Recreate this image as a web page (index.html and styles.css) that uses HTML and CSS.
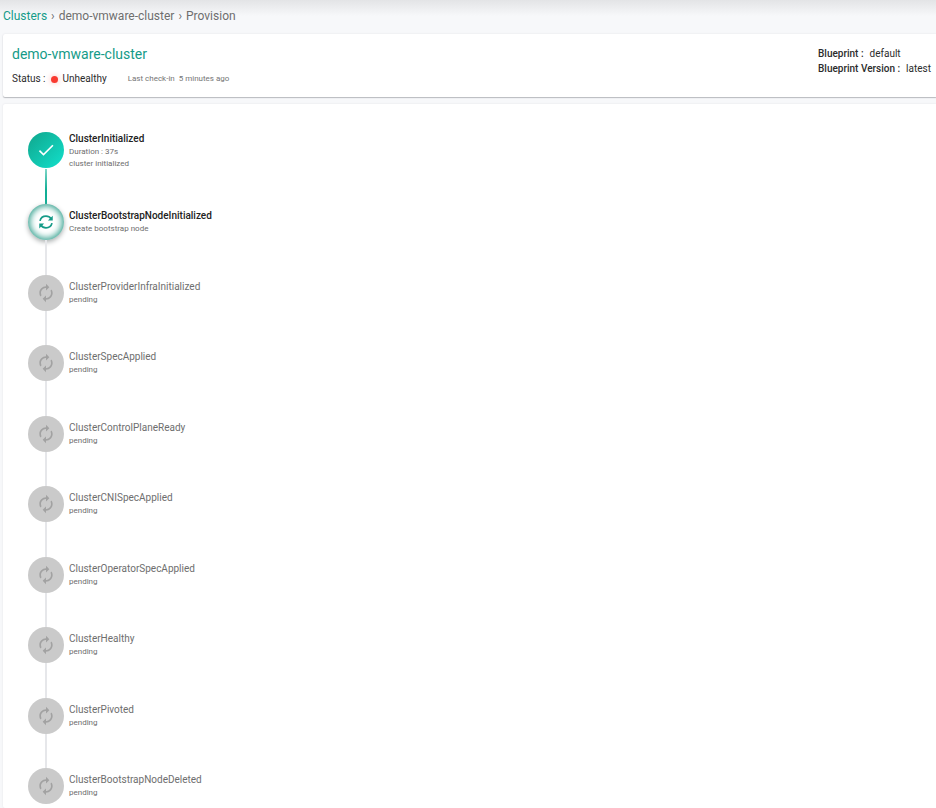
FILE: index.html
```
<!DOCTYPE html>
<html lang="en">
<head>
    <meta charset="UTF-8">
    <meta name="viewport" content="width=device-width, initial-scale=1.0">
    <title>demo-vmware-cluster - Provision</title>
    <link rel="stylesheet" href="styles.css">
</head>
<body>
    <svg class="sprite" aria-hidden="true">
        <symbol id="icon-check" viewBox="0 0 24 24">
            <path d="M9 16.17L4.83 12l-1.42 1.41L9 19 21 7l-1.41-1.41z"/>
        </symbol>
        <symbol id="icon-sync" viewBox="0 0 24 24">
            <path d="M4 10.5C5 6.5 8.200 4.200 12 4.200c3 0 5.300 1.300 7 3.800M20 13.500c-1 4-4.200 6.300-8 6.300-3 0-5.300-1.300-7-3.800" fill="none" stroke="currentColor" stroke-width="2.300"/>
            <path d="M21 3.500v6.500h-6.500zM3 20.500v-6.500h6.500z"/>
        </symbol>
        <symbol id="icon-pending" viewBox="0 0 24 24">
            <path d="M12 6v3l4-4-4-4v3c-4.42 0-8 3.58-8 8 0 1.57.46 3.03 1.24 4.26L6.7 14.8c-.45-.83-.7-1.79-.7-2.8 0-3.31 2.69-6 6-6zm6.76 1.74L17.3 9.2c.44.84.7 1.79.7 2.8 0 3.31-2.69 6-6 6v-3l-4 4 4 4v-3c4.42 0 8-3.58 8-8 0-1.57-.46-3.03-1.24-4.26z"/>
        </symbol>
    </svg>

    <nav class="breadcrumb" aria-label="Breadcrumb">
        <a href="#">Clusters</a>
        <span class="sep">›</span>
        <span>demo-vmware-cluster</span>
        <span class="sep">›</span>
        <span>Provision</span>
    </nav>

    <header class="card summary">
        <div>
            <h1><a href="#">demo-vmware-cluster</a></h1>
            <div class="status">
                <span>Status :</span>
                <span class="dot"></span>
                <span>Unhealthy</span>
                <span class="checkin">Last check-in &nbsp;5 minutes ago</span>
            </div>
        </div>
        <dl class="blueprint">
            <div><dt>Blueprint :</dt><dd>default</dd></div>
            <div><dt>Blueprint Version :</dt><dd>latest</dd></div>
        </dl>
    </header>

    <main class="card progress">
        <ol class="steps">
            <li class="step done">
                <div class="marker"><span class="circle"><svg><use href="#icon-check"/></svg></span></div>
                <div class="info"><h2>ClusterInitialized</h2><p>Duration : 37s</p><p>cluster initialized</p></div>
            </li>
            <li class="step active">
                <div class="marker"><span class="circle"><svg><use href="#icon-sync"/></svg></span></div>
                <div class="info"><h2>ClusterBootstrapNodeInitialized</h2><p>Create bootstrap node</p></div>
            </li>
            <li class="step">
                <div class="marker"><span class="circle"><svg><use href="#icon-pending"/></svg></span></div>
                <div class="info"><h2>ClusterProviderInfraInitialized</h2><p>pending</p></div>
            </li>
            <li class="step">
                <div class="marker"><span class="circle"><svg><use href="#icon-pending"/></svg></span></div>
                <div class="info"><h2>ClusterSpecApplied</h2><p>pending</p></div>
            </li>
            <li class="step">
                <div class="marker"><span class="circle"><svg><use href="#icon-pending"/></svg></span></div>
                <div class="info"><h2>ClusterControlPlaneReady</h2><p>pending</p></div>
            </li>
            <li class="step">
                <div class="marker"><span class="circle"><svg><use href="#icon-pending"/></svg></span></div>
                <div class="info"><h2>ClusterCNISpecApplied</h2><p>pending</p></div>
            </li>
            <li class="step">
                <div class="marker"><span class="circle"><svg><use href="#icon-pending"/></svg></span></div>
                <div class="info"><h2>ClusterOperatorSpecApplied</h2><p>pending</p></div>
            </li>
            <li class="step">
                <div class="marker"><span class="circle"><svg><use href="#icon-pending"/></svg></span></div>
                <div class="info"><h2>ClusterHealthy</h2><p>pending</p></div>
            </li>
            <li class="step">
                <div class="marker"><span class="circle"><svg><use href="#icon-pending"/></svg></span></div>
                <div class="info"><h2>ClusterPivoted</h2><p>pending</p></div>
            </li>
            <li class="step">
                <div class="marker"><span class="circle"><svg><use href="#icon-pending"/></svg></span></div>
                <div class="info"><h2>ClusterBootstrapNodeDeleted</h2><p>pending</p></div>
            </li>
        </ol>
    </main>
</body>
</html>
```

FILE: styles.css
```
*{margin: 0; padding: 0; box-sizing: border-box;}
body{min-height: 100vh; display: flex; flex-direction: column; padding-left: 3px; font-family: Roboto, "Liberation Sans", sans-serif; font-size: 10px; color: #2b2b2b; background: linear-gradient(#e3e4e6, #f7f8fa 16px) #f7f8fa;}
a{color: #159b88; text-decoration: none;}
.sprite{display: none;}

.breadcrumb{display: flex; gap: 4px; padding: 8px 0 10px; font-size: 12px; line-height: 16px; color: #6e6e6e;}

.card{background: #fff; border-radius: 2px 0 0 2px;}
.summary{display: flex; justify-content: space-between; padding: 12px 5px 10px 9px; margin-bottom: 7px; box-shadow: 0 1px 1px #b9bbbf, 0 0 2px #dfe1e5;}
.summary h1{font-size: 14px; line-height: 16px; font-weight: 400;}
.status{display: flex; align-items: center; margin-top: 9px; line-height: 16px;}
.dot{width: 7px; height: 7px; margin: 0 5px; border-radius: 50%; background: #f9392f; box-shadow: 0 0 6px #fbb5b0;}
.checkin{margin-left: 21px; font-size: 8px; color: #757575;}
.blueprint{line-height: 15px;}
.blueprint div{display: flex; gap: 6px;}
.blueprint dt{font-weight: 500;}

.progress{flex: 1; display: flex; padding: 28px 25px 4px; box-shadow: 0 0 2px #dfe1e5;}
.steps{flex: 1; display: flex; flex-direction: column; list-style: none;}
.step{flex: 1 0 0; min-height: 60px; display: flex; gap: 5px; color: #6e6e6e;}
.step:first-child{flex: 0 0 72px;}
.step:last-child{flex: 0 0 36px; min-height: 0;}
.marker{display: flex; flex-direction: column; align-items: center;}
.marker::after{content: ""; flex: 1; width: 2px; background: #e6e7ea;}
.step:last-child .marker::after{display: none;}
.circle{width: 36px; height: 36px; display: flex; align-items: center; justify-content: center; border-radius: 50%; color: #a2a2a2; background: #cacaca;}
.circle svg{width: 20px; height: 20px; fill: currentColor;}
.info{padding-top: 5px;}
.info h2{font-size: 10px; line-height: 14px; font-weight: 400;}
.info p{font-size: 8px; line-height: 12px;}

.done .info{padding-top: 0;}
.done h2, .active h2{font-weight: 500; color: #222;}
.done .circle{color: #fff; background: linear-gradient(135deg, #10a68c, #12e0cc);}
.done .marker::after{margin-top: 1px; background: linear-gradient(#7fd6c8, #10ae95 60%);}
.active .circle{color: #159b88; background: #fff; box-shadow: inset 0 0 6px 2px #3da594, 0 2px 5px #a9aeae;}
.active svg{width: 18px; height: 18px;}
```
